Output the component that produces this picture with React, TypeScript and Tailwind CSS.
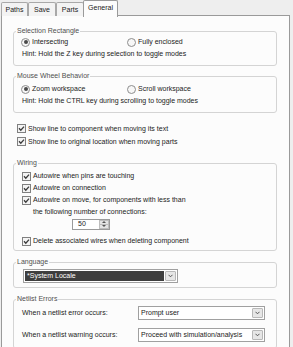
import React from "react";

function Radio({ checked }: { checked?: boolean }) {
  return (
    <span className="w-[9px] h-[9px] rounded-full border border-[#8d8d8d] bg-[#f7f7f7] flex items-center justify-center shrink-0">
      {checked && <span className="w-[4px] h-[4px] rounded-full bg-[#4a4a4a]" />}
    </span>
  );
}

function Check() {
  return (
    <span className="w-[9px] h-[9px] border border-[#808080] bg-[#f4f4f4] flex items-center justify-center shrink-0">
      <svg width="7" height="7" viewBox="0 0 7 7">
        <path d="M1 3.3 L2.8 5.2 L6 1.6" stroke="#3a3a3a" strokeWidth="1.3" fill="none" />
      </svg>
    </span>
  );
}

function Group({ title, className, children }: { title: string; className?: string; children: React.ReactNode }) {
  return (
    <fieldset className={"border border-[#d4d4d4] rounded-[3px] w-[264px] " + (className ?? "")}>
      <legend className="ml-[2px] px-[1px] text-[#505050] leading-[8px]">{title}</legend>
      {children}
    </fieldset>
  );
}

function Chevron() {
  return (
    <svg width="5" height="4" viewBox="0 0 5 4">
      <path d="M0.5 0.8 L2.5 2.8 L4.5 0.8" stroke="#555" strokeWidth="1" fill="none" />
    </svg>
  );
}

function DropButton() {
  return (
    <span className="w-[11px] h-full border border-[#b8b8b8] rounded-[1px] bg-[#e6e6e6] flex items-center justify-center shrink-0">
      <Chevron />
    </span>
  );
}

function Tab({ label, selected }: { label: string; selected?: boolean }) {
  if (selected) {
    return (
      <div className="relative z-10 h-[17px] px-[6px] -ml-px border border-b-0 border-[#9a9a9a] rounded-t-[2px] bg-[#fcfcfc] flex items-center pb-[2px] text-[#222] w-[35px] justify-center">
        {label}
      </div>
    );
  }
  return (
    <div className="mt-[2px] h-[14px] border border-b-0 border-[#a8a8a8] rounded-t-[2px] bg-[#f3f3f3] flex items-center justify-center text-[#222] -ml-px first:ml-0">
      {label}
    </div>
  );
}

export default function App() {
  return (
    <div className="w-[293px] h-[347px] overflow-hidden bg-[#eeeeee] font-['Liberation_Sans',Arial,sans-serif] text-[7px] leading-[8px] text-[#222]">
      <div className="flex items-start h-[16px] pl-[1px]">
        <div className="w-[27px] flex"><div className="w-full"><Tab label="Paths" /></div></div>
        <div className="w-[28px] flex"><div className="w-full"><Tab label="Save" /></div></div>
        <div className="w-[28px] flex"><div className="w-full"><Tab label="Parts" /></div></div>
        <Tab label="General" selected />
      </div>
      <div className="-mt-px ml-[1px] w-[289px] h-[340px] border border-[#9a9a9a] bg-[#fcfcfc] pt-[11px] pl-[11px]">
        <Group title="Selection Rectangle">
          <div className="pt-[1px] pb-[5px] pl-[7px]">
            <div className="h-[12px] flex items-center">
              <div className="w-[106px] flex items-center gap-[2px]"><Radio checked /><span>Intersecting</span></div>
              <div className="flex items-center gap-[2px]"><Radio /><span>Fully enclosed</span></div>
            </div>
            <div className="h-[12px] flex items-center pl-[1px]">Hint: Hold the Z key during selection to toggle modes</div>
          </div>
        </Group>
        <Group title="Mouse Wheel Behavior" className="mt-[6px]">
          <div className="pt-[3px] pb-[5px] pl-[7px]">
            <div className="h-[12px] flex items-center">
              <div className="w-[106px] flex items-center gap-[2px]"><Radio checked /><span>Zoom workspace</span></div>
              <div className="flex items-center gap-[2px]"><Radio /><span>Scroll workspace</span></div>
            </div>
            <div className="h-[12px] flex items-center pl-[1px]">Hint: Hold the CTRL key during scrolling to toggle modes</div>
          </div>
        </Group>
        <div className="mt-[9px] pl-[4px]">
          <div className="h-[13px] flex items-center gap-[2px]"><Check /><span>Show line to component when moving its text</span></div>
          <div className="h-[13px] flex items-center gap-[2px]"><Check /><span>Show line to original location when moving parts</span></div>
        </div>
        <Group title="Wiring" className="mt-[11px]">
          <div className="pt-[3px] pb-[3px] pl-[8px]">
            <div className="h-[12px] flex items-center gap-[2px]"><Check /><span>Autowire when pins are touching</span></div>
            <div className="h-[12px] flex items-center gap-[2px]"><Check /><span>Autowire on connection</span></div>
            <div className="h-[12px] flex items-center gap-[2px]"><Check /><span>Autowire on move, for components with less than</span></div>
            <div className="h-[12px] flex items-center pl-[11px]">the following number of connections:</div>
            <div className="h-[12px] flex items-center pl-[50px]">
              <div className="w-[38px] h-[11px] border border-[#9a9a9a] bg-white flex items-center">
                <span className="flex-1 pl-[5px]">50</span>
                <div className="w-[10px] h-full flex flex-col">
                  <span className="flex-1 bg-[#e4e4e4] border border-[#bdbdbd] flex items-center justify-center">
                    <svg width="4" height="2" viewBox="0 0 4 2"><path d="M0 2 L2 0 L4 2 Z" fill="#555" /></svg>
                  </span>
                  <span className="flex-1 bg-[#e4e4e4] border border-t-0 border-[#bdbdbd] flex items-center justify-center">
                    <svg width="4" height="2" viewBox="0 0 4 2"><path d="M0 0 L2 2 L4 0 Z" fill="#555" /></svg>
                  </span>
                </div>
              </div>
            </div>
            <div className="mt-[5px] h-[12px] flex items-center gap-[2px]"><Check /><span>Delete associated wires when deleting component</span></div>
          </div>
        </Group>
        <Group title="Language" className="mt-[7px]">
          <div className="pt-[3px] pb-[4px] pl-[9px]">
            <div className="w-[155px] h-[14px] border border-[#a0a0a0] bg-white flex items-stretch p-[1px]">
              <span className="flex-1 bg-[#3e3e3e] text-white flex items-center pl-[2px] mr-[1px]">*System Locale</span>
              <DropButton />
            </div>
          </div>
        </Group>
        <Group title="Netlist Errors" className="mt-[7px]">
          <div className="pt-[3px] pb-[6px] pl-[8px]">
            <div className="h-[14px] flex items-center">
              <span className="w-[116px]">When a netlist error occurs:</span>
              <div className="w-[127px] h-[14px] border border-[#a0a0a0] bg-white flex items-stretch p-[1px]">
                <span className="flex-1 flex items-center pl-[1px]">Prompt user</span>
                <DropButton />
              </div>
            </div>
            <div className="mt-[8px] h-[14px] flex items-center">
              <span className="w-[116px]">When a netlist warning occurs:</span>
              <div className="w-[127px] h-[14px] border border-[#a0a0a0] bg-white flex items-stretch p-[1px]">
                <span className="flex-1 flex items-center pl-[1px]">Proceed with simulation/analysis</span>
                <DropButton />
              </div>
            </div>
          </div>
        </Group>
      </div>
    </div>
  );
}
